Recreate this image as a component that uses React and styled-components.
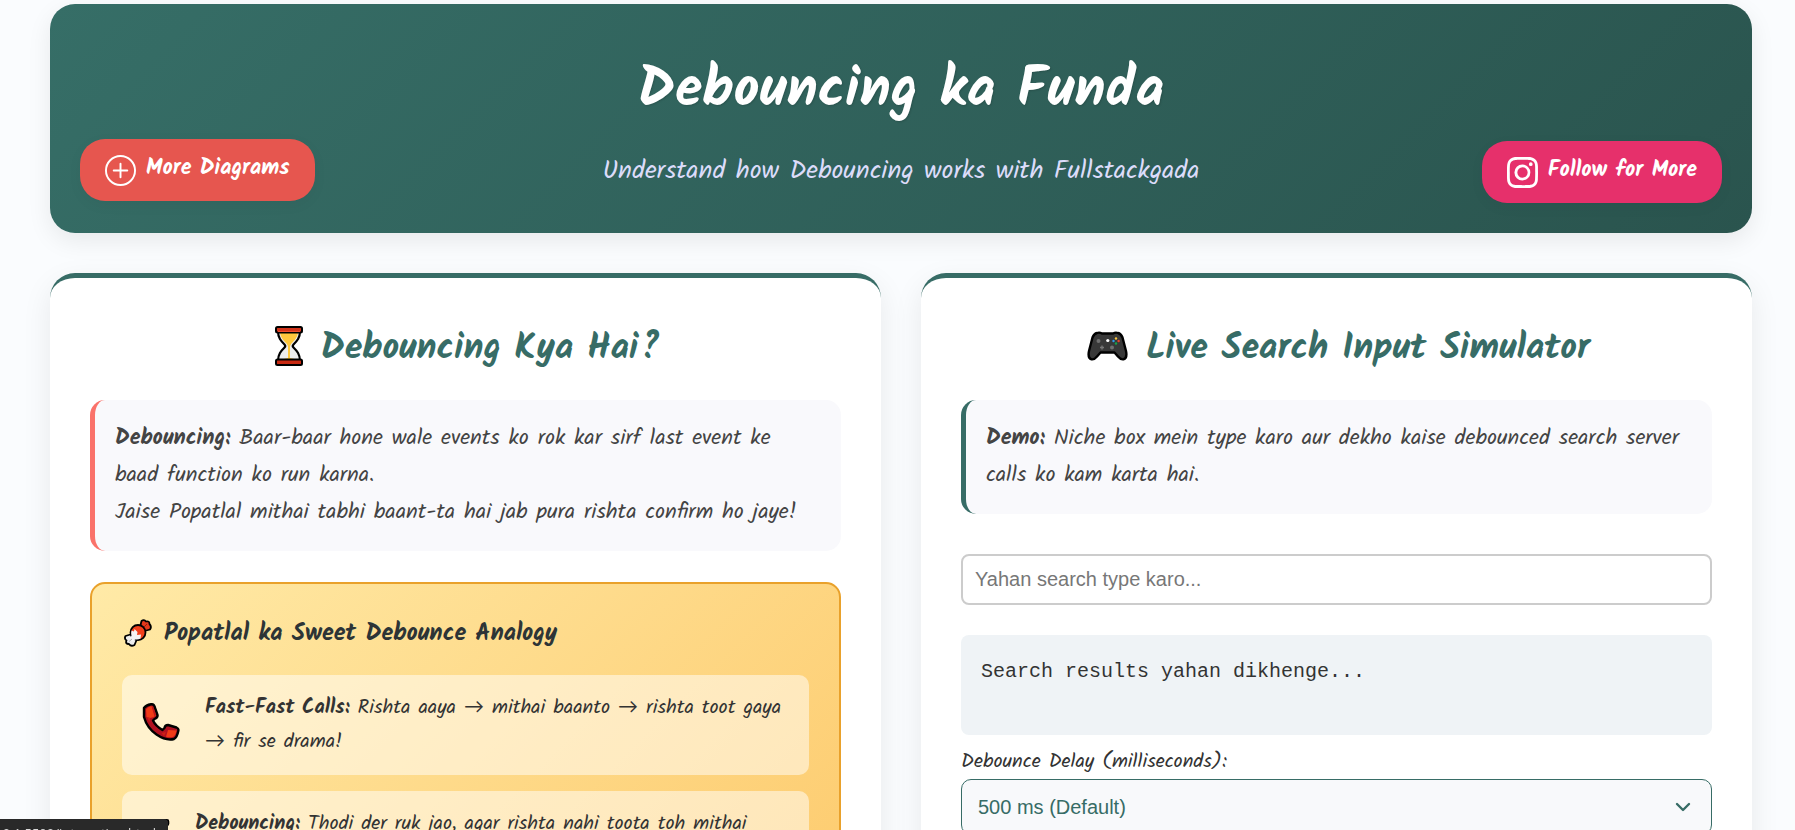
import React, { useState } from 'react';
import styled, { createGlobalStyle } from 'styled-components';
import { BsInstagram, BsPlusCircle } from 'react-icons/bs';

const GlobalStyle = createGlobalStyle`
* {
  box-sizing: border-box;
}
body {
  margin: 0;
  background-color: #fafcfe;
  color: #333;
  font-family: Kalam, Lato, "Open Sans", sans-serif;
}
h1, h2, h3, p {
  margin: 0;
}
`;

const Page = styled.div`
  padding: 4px 43px 50px 50px;
`;

const Banner = styled.header`
  display: flex;
  flex-direction: column;
  gap: 7px;
  padding: 45px 30px 30px;
  margin-bottom: 40px;
  border-radius: 25px;
  background: linear-gradient(135deg, #366e67 0%, #2a544e 100%);
  box-shadow: 0 8px 25px rgba(0, 0, 0, 0.08);
  text-align: center;
`;

const Title = styled.h1`
  color: #fff;
  font-size: 56px;
  line-height: 85px;
  text-shadow: 1px 1px 2px rgba(0, 0, 0, 0.15);
`;

const BannerRow = styled.div`
  display: grid;
  grid-template-columns: 1fr auto 1fr;
  align-items: center;
`;

const Subtitle = styled.p`
  padding-bottom: 2px;
  color: #dcdcfa;
  font-size: 26px;
  line-height: 37px;
`;

const PillLink = styled.a`
  display: flex;
  align-items: flex-start;
  gap: 10px;
  height: 62px;
  padding: 16px 25px;
  border-radius: 25px;
  justify-self: ${(props) => (props.$end ? 'end' : 'start')};
  background-color: ${(props) => props.$color};
  box-shadow: 0 4px 15px rgba(0, 0, 0, 0.04);
  color: #fff;
  font-size: 22px;
  font-weight: bold;
  line-height: 27px;
  text-decoration: none;
  transform: ${(props) => (props.$lifted ? 'translateY(-2px)' : 'none')};

  svg {
    width: 31px;
    height: 31px;
  }
`;

const Columns = styled.main`
  display: grid;
  grid-template-columns: 1fr 1fr;
  gap: 40px;
`;

const Card = styled.section`
  padding: 40px;
  border-top: 5px solid #376c66;
  border-radius: 25px;
  background-color: #fff;
  box-shadow: 0 10px 30px rgba(0, 0, 0, 0.08);
`;

const CardTitle = styled.h2`
  display: flex;
  align-items: center;
  justify-content: center;
  gap: 18px;
  margin-bottom: 20px;
  color: #376c66;
  font-size: 36px;
  line-height: 62px;

  svg {
    margin: 0 0 6px 4px;
  }
`;

const Note = styled.div`
  padding: 20px;
  border-left: 5px solid ${(props) => props.$accent};
  border-radius: 15px;
  background-color: #f9f9fc;
  color: #444;
  font-size: 22px;
  line-height: 37px;
`;

const Analogy = styled.div`
  display: flex;
  flex-direction: column;
  gap: 16px;
  margin-top: 31px;
  padding: 30px;
  border: 2px solid #e9a12b;
  border-radius: 15px;
  background: linear-gradient(135deg, #ffeaa7 0%, #fdcb6e 100%);
`;

const AnalogyTitle = styled.h3`
  display: flex;
  align-items: center;
  gap: 12px;
  padding: 0 2px 6px;
  color: #2d3436;
  font-size: 24px;
  line-height: 39px;

  svg {
    margin-bottom: 2px;
  }
`;

const Step = styled.div`
  display: flex;
  align-items: center;
  gap: 25px;
  padding: 16px 20px;
  border-radius: 10px;
  background-color: rgba(255, 255, 255, 0.5);
  font-size: 20px;
  line-height: 34px;

  svg {
    flex: none;
    margin-bottom: 6px;
  }
`;

const SearchBox = styled.input`
  display: block;
  width: 100%;
  height: 51px;
  margin: 40px 0 30px;
  padding: 0 12px;
  border: 2px solid #ccc;
  border-radius: 8px;
  background-color: #fff;
  font: 20px "Liberation Sans", Arial, sans-serif;

  &::placeholder {
    color: #777;
  }
`;

const Results = styled.div`
  min-height: 100px;
  padding: 20px;
  border-radius: 8px;
  background-color: #eff3f6;
  font: 20px/34px "Courier New", "Liberation Mono", monospace;
`;

const DelayLabel = styled.label`
  display: block;
  margin-top: 10px;
  font-size: 20px;
  line-height: 34px;
`;

const SelectWrap = styled.div`
  position: relative;

  svg {
    position: absolute;
    top: 50%;
    right: 21px;
    transform: translateY(-50%);
    pointer-events: none;
  }
`;

const DelaySelect = styled.select`
  width: 100%;
  height: 56px;
  padding: 0 16px;
  appearance: none;
  border: 1px solid #376c66;
  border-radius: 10px;
  background-color: #f8f9fb;
  color: #376c66;
  font: 20px "Liberation Sans", Arial, sans-serif;
`;

// link preview in the bottom left corner, long urls lose their start
const StatusBar = styled.div`
  position: fixed;
  left: 0;
  bottom: 0;
  display: flex;
  justify-content: flex-end;
  width: 168px;
  height: 11px;
  padding-right: 12px;
  overflow: hidden;
  border-top-right-radius: 4px;
  background-color: #292929;
  color: #d8d8d8;
  font: 13px/28px "Open Sans", sans-serif;
  white-space: nowrap;
`;

const Hourglass = ({ width, height }) => (
  <svg width={width} height={height} viewBox="0 0 28 40" aria-hidden="true">
    <path
      d="M3 5C3 12 6 15 9.500 18.500Q11 20 9.500 21.500C6 25 3 28 3 35H25C25 28 22 25 18.500 21.500Q17 20 18.500 18.500C22 15 25 12 25 5Z"
      fill="#ededed"
      stroke="#000"
      strokeWidth="2.200"
    />
    <path d="M5 7H23C22 12 20 14 16.500 17.500Q15 19 15 21V32Q19 32.500 21 34H7Q9 32.500 13 32V21Q13 19 11.500 17.500C8 14 6 12 5 7Z" fill="#ffc83d" />
    <rect x="1" y="1" width="26" height="5.500" rx="1.500" fill="#d3341b" stroke="#000" strokeWidth="2" />
    <rect x="1" y="33.500" width="26" height="5.500" rx="1.500" fill="#c92a12" stroke="#000" strokeWidth="2" />
    <path d="M3 5.500H25" stroke="#f04f2c" strokeWidth="1" />
  </svg>
);

const Gamepad = () => (
  <svg width="41" height="30" viewBox="0 0 41 30" aria-hidden="true">
    <path
      d="M10 2Q12.500 1 15 2.500H26Q28.500 1 31 2Q34 2.500 35.500 6.500L39 20Q40.500 27 36.500 28.300Q34 29 31 25.500L27.500 21.500H13.500L10 25.500Q7 29 4.500 28.300Q0.500 27 2 20L5.500 6.500Q7 2.500 10 2Z"
      fill="#383838"
      stroke="#000"
      strokeWidth="2.400"
      strokeLinejoin="round"
    />
    <circle cx="11.500" cy="10" r="2" fill="#707070" />
    <circle cx="25" cy="16.500" r="2" fill="#707070" />
    <path d="M15 14.500V18.500M13 16.500H17" stroke="#777" strokeWidth="1.400" />
    <circle cx="20.800" cy="9.500" r="1.600" fill="#fff" />
    <circle cx="29" cy="7.500" r="1.200" fill="#ffc83d" />
    <circle cx="29" cy="12.500" r="1.200" fill="#16a34a" />
    <circle cx="26.500" cy="10" r="1.200" fill="#2f9bea" />
    <circle cx="31.600" cy="10" r="1.200" fill="#e8432a" />
  </svg>
);

const Candy = () => (
  <svg width="28" height="28" viewBox="0 0 28 28" aria-hidden="true">
    <g stroke="#000" strokeWidth="1.800" strokeLinejoin="round">
      <path d="M16 8L17.500 2Q20 0 22 2.500Q25.500 1.500 25.500 5Q28 7.500 26 10.500L20.500 12Z" fill="#e3381b" />
      <path d="M8 15L1.500 17Q0 20 2.500 21.500Q1 25 5 25Q7 28 10.500 26L13 20Z" fill="#ededed" />
      <circle cx="14" cy="13.500" r="7.500" fill="#f2401c" />
    </g>
    <path d="M7.500 11.500L10 12.500L10.500 10L13.500 13L13 16L17 15.500L16.500 19.600Q14 21 11 20.400L9 23L5 19L7.500 17Q6.800 14 7.500 11.500Z" fill="#f4f4f4" />
    <path d="M20 8L23 5" stroke="#8f1d10" strokeWidth="1" />
    <path d="M8 20L5 22.500" stroke="#aaa" strokeWidth="1" />
  </svg>
);

const Phone = () => (
  <svg width="38" height="38" viewBox="0 0 38 38" aria-hidden="true">
    <path
      d="M2 5Q4 2 9 1.200Q12 1 12.500 3.500L15.500 12Q16 14.500 12.500 16L11 17.500Q13.500 23 20.500 27L22.500 25Q23 22 26 22L34.500 24.500Q37 25.500 36.300 28Q35 34.500 32 36Q24 38 14.500 31.500Q5 25 2 14Z"
      fill="#b01020"
      stroke="#000"
      strokeWidth="2.400"
      strokeLinejoin="round"
    />
    <path d="M4 6.500Q6 3.500 9.500 3L13.800 12.500Q12 14.500 8 15L4.500 14Z" fill="#f03a17" />
    <path d="M9.500 3L11 3L14 11.500L12.500 13.500Z" fill="#c01818" />
    <path d="M26 27L34.500 27.500Q33.500 32.500 31 34Q28 34.800 24 33.800Z" fill="#f03a17" />
    <path d="M5 14L8 15L7.500 19ZM19.500 30L24 29L22 33Z" fill="#cf2017" />
  </svg>
);

const Chevron = () => (
  <svg width="16" height="10" viewBox="0 0 16 10" aria-hidden="true">
    <path d="M2 2L8 8L14 2" fill="none" stroke="#376c66" strokeWidth="2.400" strokeLinecap="round" strokeLinejoin="round" />
  </svg>
);

export default function App() {
  const [query, setQuery] = useState('');

  return (
    <>
      <GlobalStyle />
      <Page>
        <Banner>
          <Title>Debouncing ka Funda</Title>
          <BannerRow>
            <PillLink href="#diagrams" $color="#e6564f" $lifted>
              <BsPlusCircle /> More Diagrams
            </PillLink>
            <Subtitle>Understand how Debouncing works with Fullstackgada</Subtitle>
            <PillLink href="#follow" $color="#e6306b" $end>
              <BsInstagram /> Follow for More
            </PillLink>
          </BannerRow>
        </Banner>

        <Columns>
          <Card>
            <CardTitle>
              <Hourglass width="28" height="40" /> Debouncing Kya Hai?
            </CardTitle>
            <Note $accent="#fa726a">
              <p>
                <strong>Debouncing:</strong> Baar-baar hone wale events ko rok kar sirf last event ke baad function ko run karna.
              </p>
              <p>Jaise Popatlal mithai tabhi baant-ta hai jab pura rishta confirm ho jaye!</p>
            </Note>
            <Analogy>
              <AnalogyTitle>
                <Candy /> Popatlal ka Sweet Debounce Analogy
              </AnalogyTitle>
              <Step>
                <Phone />
                <p>
                  <strong>Fast-Fast Calls:</strong> Rishta aaya → mithai baanto → rishta toot gaya → fir se drama!
                </p>
              </Step>
              <Step>
                <Hourglass width="28" height="38" />
                <p>
                  <strong>Debouncing:</strong> Thodi der ruk jao, agar rishta nahi toota toh mithai baanto!
                </p>
              </Step>
            </Analogy>
          </Card>

          <Card>
            <CardTitle>
              <Gamepad /> Live Search Input Simulator
            </CardTitle>
            <Note $accent="#376c66">
              <p>
                <strong>Demo:</strong> Niche box mein type karo aur dekho kaise debounced search server calls ko kam karta hai.
              </p>
            </Note>
            <SearchBox
              type="text"
              aria-label="Search"
              placeholder="Yahan search type karo..."
              value={query}
              onChange={(e) => setQuery(e.target.value)}
            />
            <Results>Search results yahan dikhenge...</Results>
            <DelayLabel htmlFor="delay">Debounce Delay (milliseconds):</DelayLabel>
            <SelectWrap>
              <DelaySelect id="delay" defaultValue="500">
                <option value="500">500 ms (Default)</option>
                <option value="1000">1000 ms</option>
              </DelaySelect>
              <Chevron />
            </SelectWrap>
          </Card>
        </Columns>
      </Page>
      <StatusBar>127.0.0.1:5500/interaction.html</StatusBar>
    </>
  );
}
